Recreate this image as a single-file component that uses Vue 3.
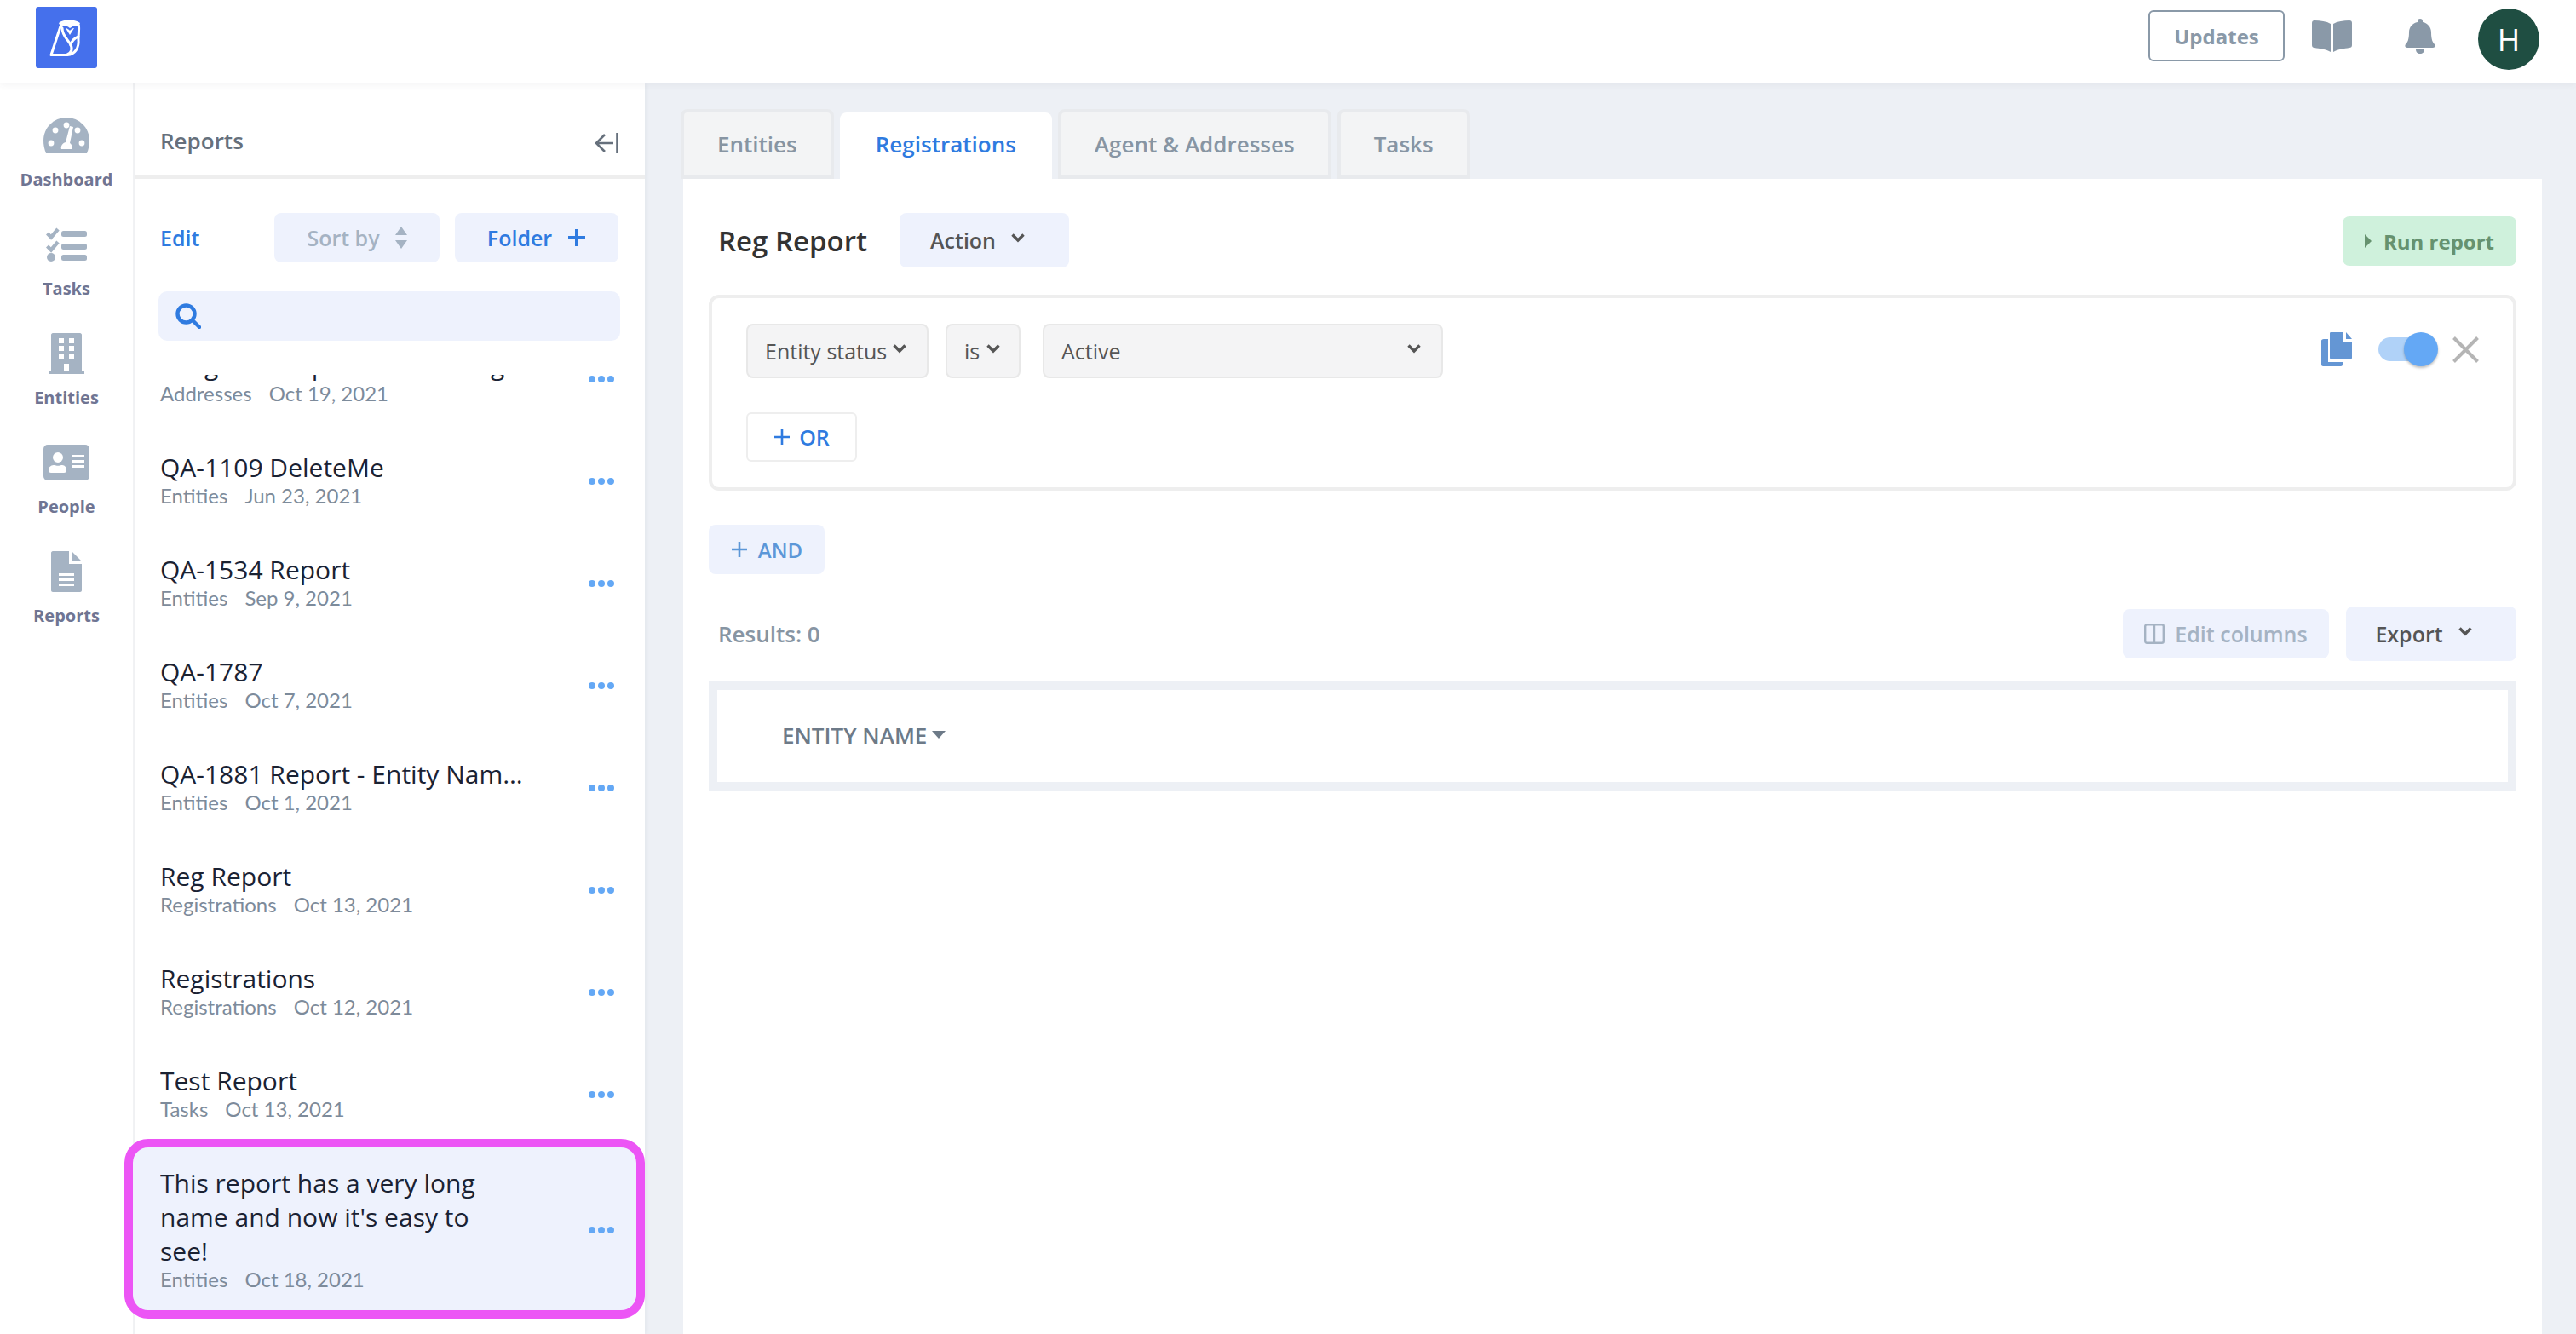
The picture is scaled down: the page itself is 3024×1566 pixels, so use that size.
<script setup>
const navItems = [
  { key: 'dash', label: 'Dashboard' },
  { key: 'tasks', label: 'Tasks' },
  { key: 'ent', label: 'Entities' },
  { key: 'people', label: 'People' },
  { key: 'reports', label: 'Reports' },
]
const reports = [
  { name: 'Long Test Report - Data Long Name', type: 'Addresses', date: 'Oct 19, 2021' },
  { name: 'QA-1109 DeleteMe', type: 'Entities', date: 'Jun 23, 2021' },
  { name: 'QA-1534 Report', type: 'Entities', date: 'Sep 9, 2021' },
  { name: 'QA-1787', type: 'Entities', date: 'Oct 7, 2021' },
  { name: 'QA-1881 Report - Entity Name Long', type: 'Entities', date: 'Oct 1, 2021' },
  { name: 'Reg Report', type: 'Registrations', date: 'Oct 13, 2021' },
  { name: 'Registrations', type: 'Registrations', date: 'Oct 12, 2021' },
  { name: 'Test Report', type: 'Tasks', date: 'Oct 13, 2021' },
]
const tabs = ['Entities', 'Registrations', 'Agent & Addresses', 'Tasks']
</script>

<template>
  <div class="page">
    <header class="topbar">
      <div class="logo">
        <svg viewBox="0 0 72 72" width="72" height="72">
          <path fill="#fff" d="M27 19 C33 14 45 14 52 19 L50 24 C47 21 44 22 40 25 C36 22 33 21 30 25 Z" />
          <path fill="#fff" d="M35 25 L40 33 L45 25 C43 25 41 27 40 28 C39 27 37 25 35 25 Z" />
          <g fill="none" stroke="#fff" stroke-width="3" stroke-linejoin="round" stroke-linecap="round">
            <path d="M29 23 L18 56.5 H37 C46 56 51 48 50 38 C50 32 51 28 50.5 22" />
            <path d="M31 25 C31 33 36 37 40 43 C44 49 42 54 37 56" />
            <path d="M50 35 C45 37 42 40 41 45" />
          </g>
        </svg>
      </div>
      <div class="top-right">
        <button class="updates">Updates</button>
        <svg class="book" viewBox="0 0 47 37" width="47" height="37">
          <path fill="#8a99a8" d="M3 0 C10 0 17 1 22 4 V37 C17 34 9 33 3 32 C1 32 0 31 0 29 V3 C0 1 1 0 3 0 Z M44 0 C37 0 30 1 25 4 V37 C30 34 38 33 44 32 C46 32 47 31 47 29 V3 C47 1 46 0 44 0 Z" />
        </svg>
        <svg class="bell" viewBox="0 0 36 41" width="36" height="41">
          <path fill="#8a99a8" d="M18 0 C20 0 21 1 21 3 V4 C27 5 31 10 31 16 C31 25 33 28 35 30 C36 31 36 34 33 34 H3 C0 34 0 31 1 30 C3 28 5 25 5 16 C5 10 9 5 15 4 V3 C15 1 16 0 18 0 Z M13 36 H23 C23 39 21 41 18 41 C15 41 13 39 13 36 Z" />
        </svg>
        <div class="avatar">H</div>
      </div>
    </header>

    <div class="body">
      <nav class="rail">
        <div v-for="n in navItems" :key="n.key" class="nav-item">
          <div class="nav-icon">
            <svg v-if="n.key === 'dash'" viewBox="0 0 54 42" width="54" height="42">
              <path fill="#a5b3c3" d="M27 0 C12 0 0 12 0 27 C0 32 1 37 3 42 H51 C53 37 54 32 54 27 C54 12 42 0 27 0 Z" />
              <g fill="#fff">
                <circle cx="9" cy="30" r="3.4" /><circle cx="14" cy="15" r="3.4" /><circle cx="27" cy="9" r="3.4" /><circle cx="40" cy="15" r="3.4" /><circle cx="45" cy="30" r="3.4" />
                <path d="M31 10 L35 11 L31 30 C34 32 34 36 33 37 H21 C20 34 22 30 26 29 Z" />
              </g>
            </svg>
            <svg v-else-if="n.key === 'tasks'" viewBox="0 0 48 40" width="48" height="40">
              <path fill="none" stroke="#a5b3c3" stroke-width="4.4" d="M1.5 7 L6 11.5 L14 2 M1.5 22 L6 26.5 L14 17" />
              <g fill="#a5b3c3">
                <circle cx="6" cy="35" r="5" />
                <rect x="18" y="4" width="30" height="7" rx="2.5" /><rect x="18" y="19" width="30" height="7" rx="2.5" /><rect x="18" y="32" width="30" height="7" rx="2.5" />
              </g>
            </svg>
            <svg v-else-if="n.key === 'ent'" viewBox="0 0 42 48" width="42" height="48">
              <path fill="#a5b3c3" fill-rule="evenodd" d="M5 0 H37 C38 0 39 1 39 2 V45 H42 V48 H0 V45 H3 V2 C3 1 4 0 5 0 Z M12 6 V12 H18 V6 Z M24 6 V12 H30 V6 Z M12 15 V21 H18 V15 Z M24 15 V21 H30 V15 Z M12 24 V30 H18 V24 Z M24 24 V30 H30 V24 Z M18 36 V45 H24 V36 Z" />
            </svg>
            <svg v-else-if="n.key === 'people'" viewBox="0 0 54 42" width="54" height="42">
              <rect width="54" height="42" rx="5" fill="#a5b3c3" />
              <g fill="#fff">
                <circle cx="17" cy="15" r="6" />
                <path d="M6 30 C6 25 10 24 13 24 C15 25 19 25 21 24 C24 24 27 25 27 30 C27 32 26 33 24 33 H9 C7 33 6 32 6 30 Z" />
                <rect x="33" y="12" width="15" height="3" /><rect x="33" y="18" width="15" height="3" /><rect x="33" y="24" width="15" height="3" />
              </g>
            </svg>
            <svg v-else viewBox="0 0 36 48" width="36" height="48">
              <path fill="#a5b3c3" d="M2 0 H21 V15 H36 V46 C36 47 35 48 34 48 H2 C1 48 0 47 0 46 V2 C0 1 1 0 2 0 Z M24 0 L36 12 H24 Z" />
              <g fill="#fff"><rect x="9" y="26" width="18" height="3" /><rect x="9" y="32" width="18" height="3" /><rect x="9" y="38" width="18" height="3" /></g>
            </svg>
          </div>
          <span class="nav-label">{{ n.label }}</span>
        </div>
      </nav>

      <aside class="panel">
        <div class="panel-head">
          <span class="panel-title">Reports</span>
          <svg class="collapse" viewBox="0 0 28 24" width="28" height="24">
            <g fill="none" stroke="#66707c" stroke-width="2.6">
              <path d="M12 2 L2 12 L12 22 M2 12 H22" />
              <path d="M26.5 0 V24" />
            </g>
          </svg>
        </div>
        <div class="panel-tools">
          <span class="edit">Edit</span>
          <button class="tool sort">Sort by
            <svg viewBox="0 0 14 28" width="14" height="28"><path fill="#a5b3c3" d="M7 1 L14 11 H0 Z M0 17 H14 L7 27 Z" /></svg>
          </button>
          <button class="tool folder">Folder
            <svg viewBox="0 0 22 22" width="22" height="22"><path stroke="#2f7be0" stroke-width="4" d="M11 1 V21 M1 11 H21" /></svg>
          </button>
        </div>
        <div class="search">
          <svg viewBox="0 0 30 30" width="30" height="30">
            <g fill="none" stroke="#2f7be0" stroke-width="4.4">
              <circle cx="12.5" cy="12.5" r="10" />
              <path stroke-linecap="round" d="M20 20 L28 28" />
            </g>
          </svg>
        </div>
        <div class="list">
          <div class="list-inner">
            <div v-for="r in reports" :key="r.name" class="item">
              <div class="item-text">
                <div class="item-name">{{ r.name }}</div>
                <div class="item-meta"><span>{{ r.type }}</span><span>{{ r.date }}</span></div>
              </div>
              <svg class="dots" viewBox="0 0 30 8" width="30" height="8"><g fill="#64a8f5"><circle cx="4" cy="4" r="4" /><circle cx="15" cy="4" r="4" /><circle cx="26" cy="4" r="4" /></g></svg>
            </div>
            <div class="item item-hl">
              <div class="item-text">
                <div class="item-name wrap">This report has a very long name and now it's easy to see!</div>
                <div class="item-meta"><span>Entities</span><span>Oct 18, 2021</span></div>
              </div>
              <svg class="dots" viewBox="0 0 30 8" width="30" height="8"><g fill="#64a8f5"><circle cx="4" cy="4" r="4" /><circle cx="15" cy="4" r="4" /><circle cx="26" cy="4" r="4" /></g></svg>
            </div>
          </div>
        </div>
      </aside>

      <main class="main">
        <div class="tabs">
          <div v-for="(t, i) in tabs" :key="t" class="tab" :class="{ active: i === 1 }">{{ t }}</div>
        </div>
        <section class="content">
          <div class="title-row">
            <h1 class="report-title">Reg Report</h1>
            <button class="soft action">Action
              <svg class="chev" viewBox="0 0 16 11" width="16" height="11"><path fill="none" stroke="#555" stroke-width="3.4" d="M1.5 1.5 L8 8 L14.5 1.5" /></svg>
            </button>
            <button class="run">
              <svg viewBox="0 0 8 16" width="8" height="16"><path fill="#66926f" d="M0 0 L8 8 L0 16 Z" /></svg>
              Run report
            </button>
          </div>

          <div class="filter">
            <div class="filter-row">
              <div class="select s1">Entity status<svg class="chev" viewBox="0 0 16 11" width="16" height="11"><path fill="none" stroke="#555" stroke-width="3.4" d="M1.5 1.5 L8 8 L14.5 1.5" /></svg></div>
              <div class="select s2">is<svg class="chev" viewBox="0 0 16 11" width="16" height="11"><path fill="none" stroke="#555" stroke-width="3.4" d="M1.5 1.5 L8 8 L14.5 1.5" /></svg></div>
              <div class="select s3">Active<svg class="chev" viewBox="0 0 16 11" width="16" height="11"><path fill="none" stroke="#555" stroke-width="3.4" d="M1.5 1.5 L8 8 L14.5 1.5" /></svg></div>
              <div class="filter-actions">
                <svg viewBox="0 0 36 40" width="36" height="40">
                  <path fill="#6496d4" d="M3 8 H8 V35 H25 V38 C25 39 24 40 23 40 H2 C1 40 0 39 0 38 V10 C0 9 1 8 3 8 Z M11 0 H26 V11 H36 V30 C36 31 35 32 34 32 H12 C11 32 10 31 10 30 V2 C10 1 10 0 11 0 Z M29 0 L36 8 H29 Z" />
                </svg>
                <div class="toggle"><span class="thumb"></span></div>
                <svg viewBox="0 0 31 31" width="31" height="31"><path stroke="#b5b5b5" stroke-width="4" d="M1.5 1.5 L29.5 29.5 M29.5 1.5 L1.5 29.5" /></svg>
              </div>
            </div>
            <button class="or">
              <svg viewBox="0 0 20 20" width="20" height="20"><path stroke="#2f7be0" stroke-width="2.6" d="M10 1 V19 M1 10 H19" /></svg>
              OR
            </button>
          </div>

          <button class="and">
            <svg viewBox="0 0 20 20" width="20" height="20"><path stroke="#5c97d8" stroke-width="2.6" d="M10 1 V19 M1 10 H19" /></svg>
            AND
          </button>

          <div class="results-row">
            <span class="results">Results: 0</span>
            <button class="soft cols">
              <svg viewBox="0 0 24 24" width="24" height="24"><g fill="none" stroke="#a5b3c3" stroke-width="2.4"><rect x="1.2" y="1.2" width="21.6" height="21.6" rx="2" /><path d="M12 1 V23" /></g></svg>
              Edit columns
            </button>
            <button class="soft export">Export
              <svg class="chev" viewBox="0 0 16 11" width="16" height="11"><path fill="none" stroke="#555" stroke-width="3.4" d="M1.5 1.5 L8 8 L14.5 1.5" /></svg>
            </button>
          </div>

          <div class="table">
            <span class="th">ENTITY NAME</span>
            <svg viewBox="0 0 16 9" width="16" height="9"><path fill="#6d7a88" d="M0 0 H16 L8 9 Z" /></svg>
          </div>
        </section>
      </main>
    </div>
  </div>
</template>

<style>
html, body { margin: 0; padding: 0; background: #edf0f5; }
</style>

<style scoped>
* { box-sizing: border-box; }
button { font-family: inherit; border: 0; cursor: pointer; }
.page {
  width: 3024px; height: 1566px; overflow: hidden;
  display: flex; flex-direction: column;
  background: #edf0f5;
  font-family: "Open Sans", sans-serif;
}
.topbar {
  height: 98px; flex: none; background: #fff;
  display: flex; align-items: flex-start;
  padding: 8px 43px 0 42px;
  box-shadow: 0 2px 8px rgba(60, 70, 90, .06);
  position: relative; z-index: 3;
}
.logo { width: 72px; height: 72px; background: #4570ec; border-radius: 3px; }
.logo svg { display: block; }
.top-right { margin-left: auto; display: flex; align-items: center; height: 76px; }
.updates {
  width: 160px; height: 60px; margin-top: -8px; background: #fff;
  border: 2px solid #8a99a8; border-radius: 6px;
  font-size: 24px; font-weight: 700; color: #8a99a8;
}
.book { margin: -8px 0 0 32px; }
.bell { margin: -8px 0 0 62px; }
.avatar {
  width: 72px; height: 72px; margin-left: 50px; border-radius: 50%;
  background: #1f4e42; color: #fff; font-size: 36px;
  display: flex; align-items: center; justify-content: center;
}
.body { flex: 1; display: flex; min-height: 0; }
.rail {
  width: 158px; flex: none; background: #fff; border-right: 2px solid #f1f2f4;
  padding-top: 37px;
  display: flex; flex-direction: column;
}
.nav-item { height: 128px; display: flex; flex-direction: column; align-items: center; }
.nav-icon { height: 48px; display: flex; align-items: center; justify-content: center; }
.nav-icon svg { display: block; }
.nav-label { margin-top: 14px; font-size: 20px; line-height: 28px; font-weight: 700; color: #6f7593; }
.panel {
  width: 599px; flex: none; background: #fff;
  display: flex; flex-direction: column;
  box-shadow: 2px 0 4px rgba(60, 70, 90, .05);
  position: relative; z-index: 2;
}
.panel-head {
  height: 112px; flex: none; border-bottom: 4px solid #eeeeee;
  padding: 26px 31px 0 30px; display: flex; align-items: center; justify-content: space-between;
}
.collapse { margin-top: 6px; }
.panel-title { font-size: 26px; font-weight: 600; color: #66707c; }
.panel-tools { margin-top: 40px; height: 58px; flex: none; padding-left: 30px; display: flex; align-items: center; }
.edit { font-size: 25px; font-weight: 600; color: #2f7be0; width: 134px; }
.tool {
  height: 58px; border-radius: 8px; background: #eef2fd;
  font-size: 25px; font-weight: 600;
  display: flex; align-items: center; justify-content: center; gap: 18px;
}
.sort { width: 194px; color: #a5b3c3; }
.folder { width: 192px; margin-left: 18px; color: #2f7be0; }
.search {
  margin: 34px 0 0 28px; width: 542px; height: 58px; flex: none;
  border-radius: 10px; background: #eef2fd;
  padding-left: 20px; display: flex; align-items: center;
}
.list { margin: 40px 0 0 -12px; width: 611px; flex: 1; overflow: hidden; min-height: 0; }
.list-inner { margin-top: -55px; }
.item {
  height: 120px; padding: 24px 36px 0 42px;
  display: flex; align-items: flex-start; justify-content: space-between;
}
.item-text { min-width: 0; }
.item-name {
  width: 434px; font-size: 30px; line-height: 40px; color: #1a2233;
  white-space: nowrap; overflow: hidden; text-overflow: ellipsis;
}
.item-name.wrap { width: 400px; white-space: normal; }
.item-meta {
  margin-top: -2px; font-family: Lato, sans-serif; font-size: 24px; line-height: 30px;
  color: #7d8b9b; display: flex; gap: 20px; white-space: nowrap;
}
.dots { flex: none; margin-top: 32px; }
.item-hl {
  height: 211px; margin-top: -8px; padding: 22px 26px 0 32px;
  border: 10px solid #ec55f5; border-radius: 28px; background: #eef2fd;
}
.item-hl .dots { margin-top: 71px; }
.main { flex: 1; min-width: 0; padding: 30px 40px 0 42px; display: flex; flex-direction: column; }
.tabs { height: 82px; flex: none; display: flex; }
.tab {
  height: 82px; padding: 0 39px; background: #f3f4f5;
  border: 4px solid #e8eaed; border-radius: 8px 8px 0 0;
  font-size: 26px; font-weight: 600; color: #8795a3;
  display: flex; align-items: center; margin-right: 7px;
}
.tab.active {
  height: 78px; margin-top: 4px; background: #fff; border: 0; padding: 0 42px 4px;
  color: #2f7be0;
}
.content { flex: 1; margin-left: 3px; background: #fff; padding: 40px 30px 0; display: flex; flex-direction: column; }
.title-row { height: 64px; flex: none; display: flex; align-items: center; padding-left: 11px; }
.report-title { margin: 0; font-size: 33px; font-weight: 600; color: #333; }
.soft {
  border-radius: 8px; background: #eef2fd; font-size: 25px; font-weight: 600; color: #555;
  display: flex; align-items: center; justify-content: center; gap: 18px;
}
.action { width: 199px; height: 64px; margin-left: 38px; padding: 0 16px 0 0; }
.chev { margin-top: -5px; flex: none; }
.run {
  margin-left: auto; margin-top: 2px; width: 204px; height: 58px; border-radius: 8px;
  background: #cff1dc; color: #66926f; font-size: 24px; font-weight: 700;
  display: flex; align-items: center; justify-content: center; gap: 14px;
}
.filter {
  margin-top: 32px; height: 230px; flex: none;
  border: 4px solid #eeeeee; border-radius: 12px;
  padding: 30px 40px; display: flex; flex-direction: column; align-items: flex-start;
}
.filter-row { width: 100%; height: 64px; display: flex; align-items: center; }
.select {
  flex: none; height: 64px; background: #f4f4f5; border: 2px solid #e8e8e8; border-radius: 8px;
  font-size: 25px; color: #555; display: flex; align-items: center; justify-content: space-between;
  padding: 0 24px 0 20px;
}
.s1 { width: 214px; }
.s2 { width: 88px; margin-left: 20px; padding-right: 22px; }
.s3 { width: 470px; margin-left: 26px; }
.filter-actions { margin: -4px 0 0 auto; display: flex; align-items: center; }
.toggle { position: relative; width: 48px; height: 28px; margin: 0 39px 0 31px; border-radius: 14px; background: #b0d2f8; }
.thumb {
  position: absolute; left: 30px; top: -6px; width: 40px; height: 40px; border-radius: 50%;
  background: #64a8f5; box-shadow: 0 2px 3px rgba(0, 0, 0, .25);
}
.or {
  margin-top: 40px; width: 130px; height: 58px; background: #fff;
  border: 2px solid #eeeeee; border-radius: 6px;
  color: #2f7be0; font-size: 25px; font-weight: 600;
  display: flex; align-items: center; justify-content: center; gap: 10px;
}
.and {
  margin-top: 40px; width: 136px; height: 58px; flex: none; border-radius: 8px;
  background: #eef2fd; color: #5c97d8; font-size: 24px; font-weight: 600;
  display: flex; align-items: center; justify-content: center; gap: 12px;
}
.results-row { margin-top: 38px; height: 64px; flex: none; display: flex; align-items: center; padding-left: 11px; }
.results { font-size: 26px; font-weight: 600; color: #8795a3; margin-right: auto; }
.cols { width: 242px; height: 58px; color: #a5b3c3; gap: 12px; }
.export { width: 200px; height: 64px; margin-left: 20px; padding: 0 18px 0 0; }
.table {
  margin-top: 24px; height: 128px; flex: none; background: #fff;
  border: 10px solid #edf0f5; padding: 0 0 3px 76px;
  display: flex; align-items: center; gap: 6px;
}
.th { font-size: 26px; font-weight: 600; color: #6d7a88; }
</style>
